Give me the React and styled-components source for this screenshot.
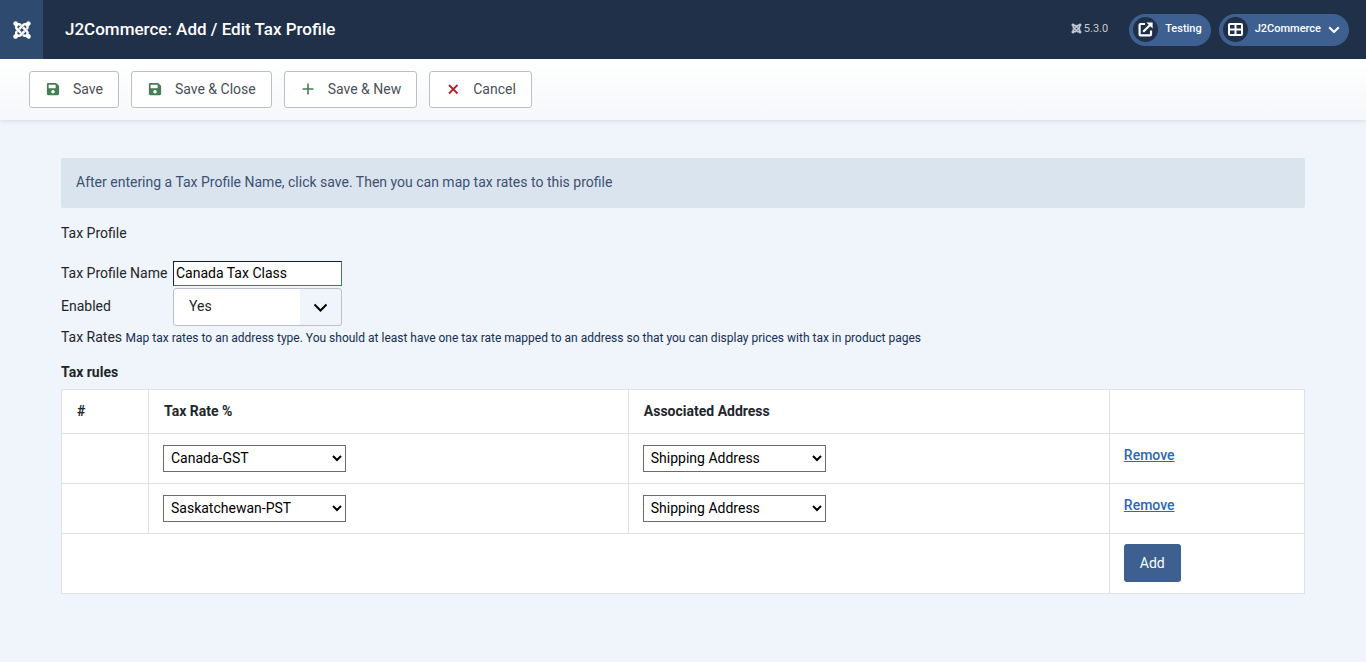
import { useState } from 'react'
import styled, { createGlobalStyle } from 'styled-components'
import { FaJoomla, FaSave } from 'react-icons/fa'

const colors = {
  header: '#1f3048',
  brand: '#2f4a6f',
  pill: '#3d6090',
  page: '#f0f4fb',
  text: '#22262a',
  heading: '#132f53',
  border: '#dee2e6',
  link: '#2a69b8',
  success: '#457d54',
  danger: '#b5222c',
}

const GlobalStyle = createGlobalStyle`
  * {
    box-sizing: border-box;
  }
  body {
    margin: 0;
    background: ${colors.page};
    color: ${colors.text};
    font-family: Roboto, sans-serif;
    font-size: 14px;
    line-height: 22px;
  }
  button,
  input,
  select {
    font: inherit;
  }
`

const Header = styled.header`
  display: flex;
  align-items: center;
  height: 59px;
  padding-right: 17px;
  background: ${colors.header};
  color: #fff;
`

const Brand = styled.a`
  display: flex;
  align-items: center;
  justify-content: center;
  align-self: stretch;
  width: 43px;
  background: ${colors.brand};
  color: #fff;
  font-size: 20px;
`

const PageTitle = styled.h1`
  flex: 1;
  margin: 0 0 0 22px;
  padding-bottom: 2px;
  font-size: 17px;
  font-weight: 500;
`

const Version = styled.div`
  display: flex;
  align-items: center;
  gap: 2px;
  margin-right: 21px;
  padding-bottom: 2px;
  color: #c3cad4;
  font-size: 11px;

  & svg {
    stroke: currentColor;
    stroke-width: 20px;
  }
`

const HeaderPill = styled.button`
  display: flex;
  align-items: center;
  gap: 7px;
  height: 32px;
  margin-left: ${({ $spaced }) => ($spaced ? '8px' : '0')};
  padding: 0 9px 0 4px;
  border: 0;
  border-radius: 16px;
  background: ${colors.pill};
  color: #fff;
  font-size: 11px;
  font-weight: 500;
`

const PillText = styled.span`
  padding-bottom: 2px;
`

const PillIcon = styled.span`
  display: flex;
  align-items: center;
  justify-content: center;
  width: 25px;
  height: 25px;
  border-radius: 50%;
  background: ${colors.header};
`

const Toolbar = styled.div`
  display: flex;
  flex-wrap: wrap;
  gap: 12px;
  padding: 12px 29px;
  background: linear-gradient(#fff, #f5f7fa);
  box-shadow: 0 1px 4px rgba(60, 80, 140, 0.14);
`

const ToolbarButton = styled.button`
  display: flex;
  align-items: center;
  gap: 12px;
  height: 37px;
  padding: 0 15px 2px;
  border: 1px solid #bcc0c5;
  border-radius: 3px;
  background: #fff;
  color: #495057;

  & svg {
    width: 16px;
    color: ${({ $danger }) => ($danger ? colors.danger : colors.success)};
  }
`

const Content = styled.main`
  padding: 38px 61px;
`

const Alert = styled.div`
  padding: 13px 15px 15px;
  border-radius: 2px;
  background: #dae4ee;
  color: #3f5070;
`

const SectionTitle = styled.h2`
  margin: 14px 0 17px;
  font-size: 14px;
  font-weight: 400;
`

const ProfileForm = styled.div`
  display: grid;
  grid-template-columns: 110px 169px;
  align-items: center;
  gap: 2px;

  & label {
    padding-bottom: 2px;
    white-space: nowrap;
  }
`

const NameInput = styled.input`
  width: 100%;
  height: 25px;
  padding: 0 2px 2px;
  border: 1px solid ${colors.success};
  border-top-color: #14202a;
  border-left-color: #14202a;
  background: #fff;
  color: #000;
`

const EnabledWrapper = styled.div`
  position: relative;

  & svg {
    position: absolute;
    top: 15px;
    right: 14px;
    color: #000;
    pointer-events: none;
  }
`

const EnabledSelect = styled.select`
  display: block;
  width: 100%;
  height: 38px;
  padding: 0 15px 2px;
  appearance: none;
  border: 1px solid #b9bfd0;
  border-radius: 3px;
  background: linear-gradient(to left, ${colors.page} 41px, #fff 41px);
  color: ${colors.text};
`

const RatesHelp = styled.p`
  margin: 0 0 12px;

  & small {
    color: ${colors.heading};
    font-size: 12px;
  }
`

const RulesTable = styled.table`
  width: 100%;
  table-layout: fixed;
  border-collapse: collapse;
  background: #fff;

  & caption {
    padding-bottom: 6px;
    background: ${colors.page};
    font-weight: 700;
    text-align: left;
  }
  & th,
  & td {
    padding: 10px 14px 11px;
    border: 1px solid ${colors.border};
    text-align: left;
    vertical-align: top;
  }
  & th {
    padding-left: 15px;
    font-weight: 700;
  }
`

const Column = styled.col`
  width: ${({ $width }) => $width};
`

const RuleSelect = styled.select`
  display: block;
  width: 183px;
  max-width: 100%;
  height: 27px;
  margin-top: 1px;
  padding: 0 3px 1px;
  border: 1px solid #6b6b6b;
  border-radius: 0;
  background: #fff;
  color: #000;
`

const RemoveLink = styled.a`
  color: ${colors.link};
  font-weight: 500;
`

const AddButton = styled.button`
  display: block;
  height: 38px;
  padding: 0 16px;
  border: 0;
  border-radius: 3px;
  background: ${colors.pill};
  color: #fff;
`

const PlusIcon = () => (
  <svg height="16" viewBox="0 0 16 16" fill="none" stroke="currentColor" strokeWidth="1.6">
    <path d="M8 2.5v11M2.5 8h11" />
  </svg>
)

const CrossIcon = () => (
  <svg height="16" viewBox="0 0 16 16" fill="none" stroke="currentColor" strokeWidth="1.8">
    <path d="M4 4l8.5 8.5M12.5 4L4 12.5" />
  </svg>
)

const ExternalIcon = () => (
  <svg width="15" height="15" viewBox="0 0 15 15" fill="none" stroke="currentColor" strokeWidth="2.2">
    <path d="M7 2H2.6q-1 0-1 1v9.4q0 1 1 1H12q1 0 1-1V8.5M5.2 9.8l6.6-6.6" />
    <path d="M8.4 0.4h6.2v6.2z" fill="currentColor" stroke="none" />
  </svg>
)

const GridIcon = () => (
  <svg width="15" height="13" viewBox="0 0 15 13" fill="none" stroke="currentColor" strokeWidth="2">
    <rect x="1" y="1" width="13" height="11" rx="1" />
    <path d="M7.5 1v11M1 6.5h13" />
  </svg>
)

const ChevronIcon = ({ size, weight }) => (
  <svg width={size} height={size * 0.6} viewBox="0 0 15 9" fill="none" stroke="currentColor" strokeWidth={weight}>
    <path d="M1.5 1.5l6 6 6-6" />
  </svg>
)

const toolbarActions = [
  { label: 'Save', icon: FaSave },
  { label: 'Save & Close', icon: FaSave },
  { label: 'Save & New', icon: PlusIcon },
  { label: 'Cancel', icon: CrossIcon, danger: true },
]

const taxRates = ['Canada-GST', 'Saskatchewan-PST']
const addresses = ['Shipping Address', 'Billing Address']

function App() {
  const [rules, setRules] = useState([
    { id: 1, rate: 'Canada-GST', address: 'Shipping Address' },
    { id: 2, rate: 'Saskatchewan-PST', address: 'Shipping Address' },
  ])

  const addRule = () => {
    setRules([...rules, { id: Date.now(), rate: taxRates[0], address: addresses[0] }])
  }

  const removeRule = (event, id) => {
    event.preventDefault()
    setRules(rules.filter((rule) => rule.id !== id))
  }

  return (
    <>
      <GlobalStyle />
      <Header>
        <Brand href="#" aria-label="Home Dashboard">
          <FaJoomla />
        </Brand>
        <PageTitle>J2Commerce: Add / Edit Tax Profile</PageTitle>
        <Version>
          <FaJoomla />
          5.3.0
        </Version>
        <HeaderPill type="button">
          <PillIcon>
            <ExternalIcon />
          </PillIcon>
          <PillText>Testing</PillText>
        </HeaderPill>
        <HeaderPill type="button" $spaced>
          <PillIcon>
            <GridIcon />
          </PillIcon>
          <PillText>J2Commerce</PillText>
          <ChevronIcon size={12} weight={2.6} />
        </HeaderPill>
      </Header>
      <Toolbar>
        {toolbarActions.map(({ label, icon: Icon, danger }) => (
          <ToolbarButton key={label} type="button" $danger={danger}>
            <Icon />
            {label}
          </ToolbarButton>
        ))}
      </Toolbar>
      <Content>
        <Alert>
          After entering a Tax Profile Name, click save. Then you can map tax
          rates to this profile
        </Alert>
        <SectionTitle>Tax Profile</SectionTitle>
        <ProfileForm>
          <label htmlFor="profileName">Tax Profile Name</label>
          <NameInput id="profileName" defaultValue="Canada Tax Class" />
          <label htmlFor="enabled">Enabled</label>
          <EnabledWrapper>
            <EnabledSelect id="enabled" defaultValue="Yes">
              <option>Yes</option>
              <option>No</option>
            </EnabledSelect>
            <ChevronIcon size={15} weight={2} />
          </EnabledWrapper>
        </ProfileForm>
        <RatesHelp>
          Tax Rates{' '}
          <small>
            Map tax rates to an address type. You should at least have one tax
            rate mapped to an address so that you can display prices with tax
            in product pages
          </small>
        </RatesHelp>
        <RulesTable>
          <caption>Tax rules</caption>
          <colgroup>
            <Column $width="7%" />
            <Column $width="38.6%" />
            <Column $width="38.7%" />
            <Column />
          </colgroup>
          <thead>
            <tr>
              <th>#</th>
              <th>Tax Rate %</th>
              <th>Associated Address</th>
              <th />
            </tr>
          </thead>
          <tbody>
            {rules.map((rule) => (
              <tr key={rule.id}>
                <td />
                <td>
                  <RuleSelect aria-label="Tax Rate" defaultValue={rule.rate}>
                    {taxRates.map((rate) => (
                      <option key={rate}>{rate}</option>
                    ))}
                  </RuleSelect>
                </td>
                <td>
                  <RuleSelect aria-label="Associated Address" defaultValue={rule.address}>
                    {addresses.map((address) => (
                      <option key={address}>{address}</option>
                    ))}
                  </RuleSelect>
                </td>
                <td>
                  <RemoveLink href="#" onClick={(event) => removeRule(event, rule.id)}>
                    Remove
                  </RemoveLink>
                </td>
              </tr>
            ))}
          </tbody>
          <tfoot>
            <tr>
              <td colSpan={3} />
              <td>
                <AddButton type="button" onClick={addRule}>
                  Add
                </AddButton>
              </td>
            </tr>
          </tfoot>
        </RulesTable>
      </Content>
    </>
  )
}

export default App
